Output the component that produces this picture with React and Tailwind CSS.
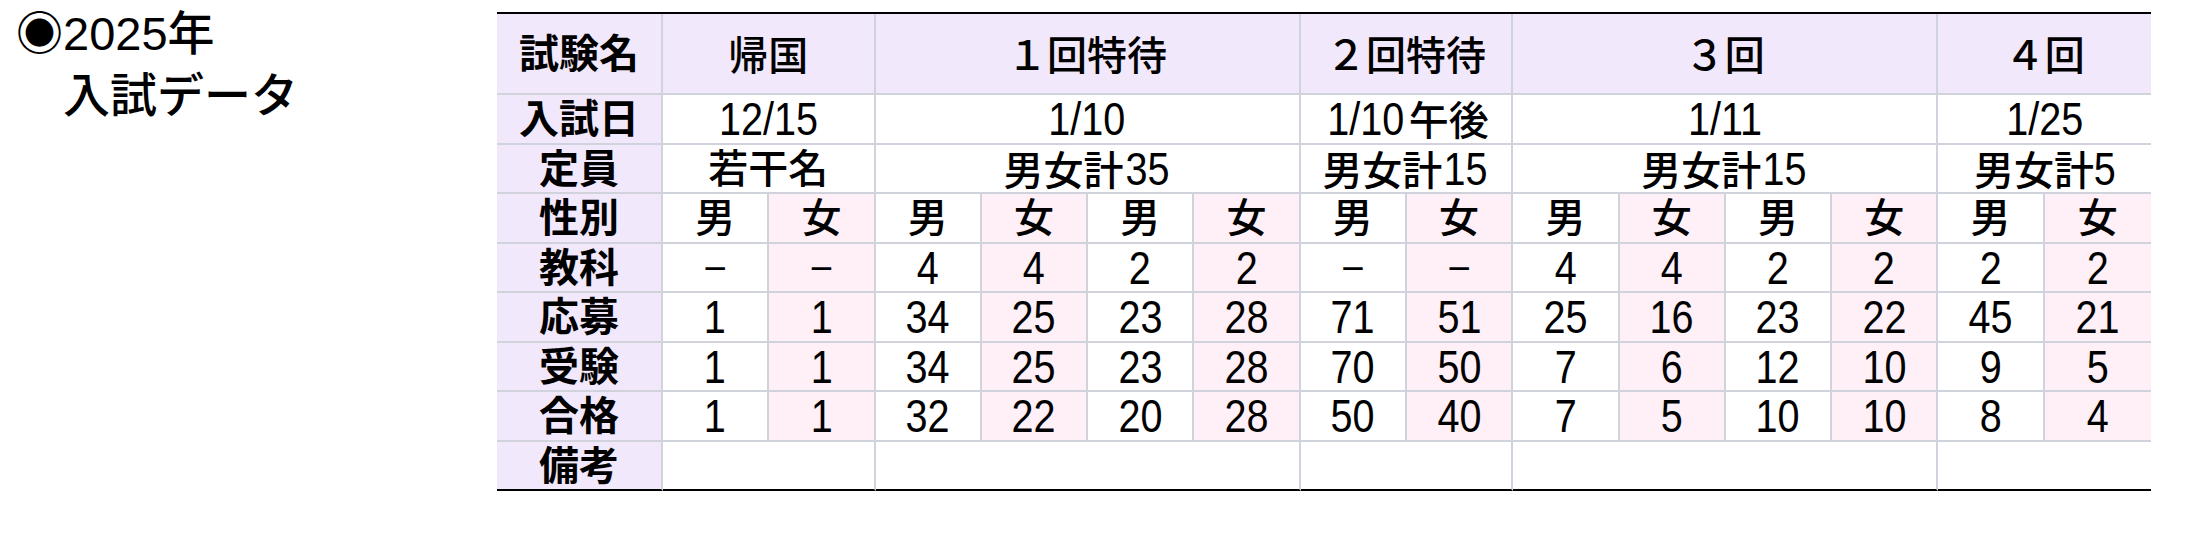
import React from "react";

const LAV = "bg-[#f1e8fb]";
const PINK = "bg-[#fef0f6]";

const groups = [
  { name: "帰国", span: 2, date: "12/15", cap: "若干名" },
  { name: "１回特待", span: 4, date: "1/10", cap: "男女計35" },
  { name: "２回特待", span: 2, date: "1/10午後", cap: "男女計15" },
  { name: "３回", span: 4, date: "1/11", cap: "男女計15" },
  { name: "４回", span: 2, date: "1/25", cap: "男女計5" },
];

const rows = [
  { label: "教科", cells: ["−", "−", "4", "4", "2", "2", "−", "−", "4", "4", "2", "2", "2", "2"] },
  { label: "応募", cells: ["1", "1", "34", "25", "23", "28", "71", "51", "25", "16", "23", "22", "45", "21"] },
  { label: "受験", cells: ["1", "1", "34", "25", "23", "28", "70", "50", "7", "6", "12", "10", "9", "5"] },
  { label: "合格", cells: ["1", "1", "32", "22", "20", "28", "50", "40", "7", "5", "10", "10", "8", "4"] },
];

const cellBase = "border-b-2 border-[#d0d3dc] text-center align-middle p-0";

// digits in the table are taller and narrower than the kanji
function Txt({ s }) {
  const parts = s.match(/[0-9/]+|[^0-9/]+/g) || [];
  return parts.map((p, i) =>
    /[0-9/]/.test(p) ? (
      <span
        key={i}
        className="inline-block text-[46px] font-normal scale-x-[0.86] -mx-[2px]"
      >
        {p}
      </span>
    ) : (
      <span key={i}>{p}</span>
    )
  );
}

function Label({ children, last }) {
  return (
    <td
      className={`${cellBase} ${LAV} border-r-2 font-bold ${last ? "border-b-black" : ""}`}
    >
      {children}
    </td>
  );
}

export default function App() {
  return (
    <div className="flex bg-white text-black w-[2210px] h-[560px]">
      <div
        className="w-[497px] shrink-0 pl-4 pt-[3px] text-[47px] leading-[62px] font-medium"
        style={{ fontFamily: '"Liberation Sans", "Noto Sans CJK JP", sans-serif' }}
      >
        <div>◉2025年</div>
        <div>　入試データ</div>
      </div>

      <div className="pt-3">
        <table
          className="w-[1654px] table-fixed border-separate border-spacing-0 border-t-2 border-black text-[40px] leading-none font-medium"
          style={{ fontFamily: '"Liberation Sans", "Noto Sans CJK JP", sans-serif' }}
        >
          <colgroup>
            <col className="w-[166px]" />
            {Array.from({ length: 14 }).map((_, i) => (
              <col key={i} />
            ))}
          </colgroup>
          <tbody>
            <tr className="h-[81px]">
              <Label>試験名</Label>
              {groups.map((g, i) => (
                <td
                  key={g.name}
                  colSpan={g.span}
                  className={`${cellBase} ${LAV} pt-1 ${i < groups.length - 1 ? "border-r-2" : ""}`}
                >
                  {g.name}
                </td>
              ))}
            </tr>
            <tr className="h-[50px]">
              <Label>入試日</Label>
              {groups.map((g, i) => (
                <td
                  key={g.name}
                  colSpan={g.span}
                  className={`${cellBase} ${i < groups.length - 1 ? "border-r-2" : ""}`}
                >
                  <Txt s={g.date} />
                </td>
              ))}
            </tr>
            <tr className="h-[49px]">
              <Label>定員</Label>
              {groups.map((g, i) => (
                <td
                  key={g.name}
                  colSpan={g.span}
                  className={`${cellBase} ${i < groups.length - 1 ? "border-r-2" : ""}`}
                >
                  <Txt s={g.cap} />
                </td>
              ))}
            </tr>
            <tr className="h-[50px]">
              <Label>性別</Label>
              {Array.from({ length: 14 }).map((_, i) => (
                <td
                  key={i}
                  className={`${cellBase} ${i % 2 ? PINK : ""} ${i < 13 ? "border-r-2" : ""}`}
                >
                  {i % 2 ? "女" : "男"}
                </td>
              ))}
            </tr>
            {rows.map((r, ri) => (
              <tr key={r.label} className={ri % 2 ? "h-[50px]" : "h-[49px]"}>
                <Label>{r.label}</Label>
                {r.cells.map((c, i) => (
                  <td
                    key={i}
                    className={`${cellBase} ${i % 2 ? PINK : ""} ${i < 13 ? "border-r-2" : ""}`}
                  >
                    <Txt s={c} />
                  </td>
                ))}
              </tr>
            ))}
            <tr className="h-[49px]">
              <Label last>備考</Label>
              {groups.map((g, i) => (
                <td
                  key={g.name}
                  colSpan={g.span}
                  className={`${cellBase} border-b-black ${i < groups.length - 1 ? "border-r-2" : ""}`}
                />
              ))}
            </tr>
          </tbody>
        </table>
      </div>
    </div>
  );
}
